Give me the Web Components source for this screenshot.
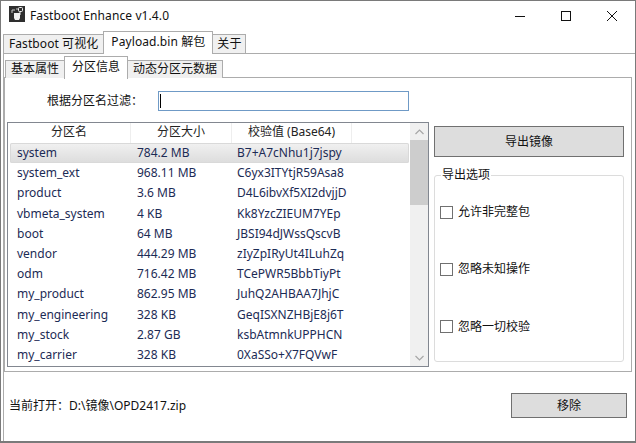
<!DOCTYPE html>
<html>
<head>
<meta charset="utf-8">
<style>
  html, body { margin: 0; padding: 0; background: #fff; }
  body { font: 12px/16px "Noto Sans", "Noto Sans CJK SC", sans-serif; color: #111; }
</style>
</head>
<body>
<fb-window>
  <fb-titlebar slot="title">Fastboot Enhance v1.4.0</fb-titlebar>
  <fb-tabs class="outer">
    <fb-tab slot="tabs">Fastboot 可视化</fb-tab>
    <fb-tab slot="tabs" selected>Payload.bin 解包</fb-tab>
    <fb-tab slot="tabs" compact>关于</fb-tab>
    <fb-tabs inner>
      <fb-tab slot="tabs" inner>基本属性</fb-tab>
      <fb-tab slot="tabs" inner selected>分区信息</fb-tab>
      <fb-tab slot="tabs" inner>动态分区元数据</fb-tab>
      <fb-partitions></fb-partitions>
    </fb-tabs>
    <fb-status></fb-status>
  </fb-tabs>
</fb-window>
<script>
class FbWindow extends HTMLElement {
  constructor() {
    super();
    this.attachShadow({ mode: 'open' });
    this.shadowRoot.innerHTML = `
      <style>
        :host { display: flex; flex-direction: column; box-sizing: border-box; width: 636px; height: 443px;
          border: 1px solid #7a7a7a; border-bottom-width: 2px; background: #fff; overflow: hidden; }
      </style>
      <slot name="title"></slot>
      <slot></slot>`;
  }
}
customElements.define('fb-window', FbWindow);

class FbTitlebar extends HTMLElement {
  constructor() {
    super();
    this.attachShadow({ mode: 'open' });
    this.shadowRoot.innerHTML = `
      <style>
        :host { display: flex; align-items: center; height: 29px; padding: 0 0 0 8px; flex: none; color: #111; }
        .logo { width: 16px; height: 16px; margin: 0 5px 3px 0; flex: none; }
        .title { flex: 1; letter-spacing: .1px; }
        .btn { width: 46px; height: 29px; display: flex; align-items: center; justify-content: center; }
      </style>
      <svg class="logo" viewBox="0 0 16 16">
        <rect width="16" height="16" fill="#2e2e2e"/>
        <path d="M3 7V4h3M8 4V2" fill="none" stroke="#c8c8c8" stroke-width="1"/>
        <rect x="9.5" y="1.5" width="4" height="4" rx="1" fill="none" stroke="#f2f2f2"/>
        <path d="M11 6v3" stroke="#f2f2f2"/>
        <path d="M5 7h6v5l-1 2H6l-1-2z" fill="#f2f2f2"/>
      </svg>
      <span class="title"><slot></slot></span>
      <span class="btn"><svg width="12" height="12"><path d="M1 6.5h10" stroke="#111" fill="none"/></svg></span>
      <span class="btn"><svg width="12" height="12"><rect x="1.5" y="1.5" width="9" height="9" stroke="#111" fill="none"/></svg></span>
      <span class="btn"><svg width="12" height="12"><path d="M1 1l10 10M11 1L1 11" stroke="#111" fill="none"/></svg></span>`;
  }
}
customElements.define('fb-titlebar', FbTitlebar);

class FbTab extends HTMLElement {
  constructor() {
    super();
    this.attachShadow({ mode: 'open' });
    this.shadowRoot.innerHTML = `
      <style>
        :host { display: flex; align-items: center; justify-content: center; box-sizing: border-box;
          height: 19px; margin-top: 3px; padding: 0 5px 1px; background: #f0f0f0; border: 1px solid #acacac; border-bottom: none;
          margin-left: -1px; white-space: nowrap; position: relative; letter-spacing: .08px; }
        :host([compact]) { padding: 0 4px 1px; }
        :host([selected]) { height: 23px; margin-top: 0; margin-bottom: -1px; padding: 0 7px 3px; background: #fff; z-index: 1; }
        :host([inner]) { height: 18px; margin-top: 4px; letter-spacing: 0; }
        :host([inner][selected]) { height: 23px; margin-top: 0; }
      </style>
      <slot></slot>`;
  }
}
customElements.define('fb-tab', FbTab);

class FbTabs extends HTMLElement {
  constructor() {
    super();
    this.attachShadow({ mode: 'open' });
    this.shadowRoot.innerHTML = `
      <style>
        :host { display: flex; flex-direction: column; flex: 1; min-height: 0; margin: 1px -1px 0 2px; }
        :host([inner]) { margin: 2px 3px 0 0; flex: none; height: 316px; }
        .strip { display: flex; height: 22px; padding-left: 1px; flex: none; }
        :host([inner]) .strip { padding-left: 2px; height: 21px; }
        .panel { flex: 1; min-height: 0; border: 1px solid #acacac; border-bottom: none; display: flex; flex-direction: column; }
        :host([inner]) .panel { border-bottom: 1px solid #acacac; }
      </style>
      <div class="strip"><slot name="tabs"></slot></div>
      <div class="panel"><slot></slot></div>`;
  }
}
customElements.define('fb-tabs', FbTabs);

class FbButton extends HTMLElement {
  constructor() {
    super();
    this.attachShadow({ mode: 'open' });
    this.shadowRoot.innerHTML = `
      <style>
        :host { display: flex; align-items: center; justify-content: center; box-sizing: border-box;
          background: #dddddd; border: 1px solid #707070; }
      </style>
      <slot></slot>`;
  }
}
customElements.define('fb-button', FbButton);

class FbCheck extends HTMLElement {
  constructor() {
    super();
    this.attachShadow({ mode: 'open' });
    this.shadowRoot.innerHTML = `
      <style>
        :host { display: flex; align-items: center; gap: 5px; height: 16px; }
        i { width: 13px; height: 13px; box-sizing: border-box; border: 1px solid #707070; background: #fff; }
      </style>
      <i></i><slot></slot>`;
  }
}
customElements.define('fb-check', FbCheck);

class FbList extends HTMLElement {
  constructor() {
    super();
    this.attachShadow({ mode: 'open' });
    const rows = JSON.parse(this.getAttribute('rows') || '[]');
    this.shadowRoot.innerHTML = `
      <style>
        :host { display: grid; grid-template-columns: 1fr 18px; box-sizing: border-box; height: 245px;
          border: 1px solid #828790; background: #fff; overflow: hidden; color: #1c2b55; }
        .main { min-width: 0; overflow: hidden; }
        .head { display: grid; grid-template-columns: 123px 101px 120px 1fr; height: 20px; color: #222; }
        .row { display: grid; grid-template-columns: 121px 101px 120px 1fr; }
        .head span { text-align: center; border-right: 1px solid #eeeeee; line-height: 18px; }
        .row { height: 20.2px; line-height: 20px; margin: 0 1px 0 2px; border-radius: 2px; }
        .row span { padding-left: 7px; overflow: hidden; white-space: nowrap; }
        .row span + span { padding-left: 6px; }
        .row span:nth-child(3) { padding: 0 6px 0 5px; }
        .row.sel { background: linear-gradient(#f1f1f1, #dcdcdc); box-shadow: inset 0 0 0 1px #d9d9d9; }
        .bar { background: #f0f0f0; display: flex; flex-direction: column; align-items: center; }
        .arrow { height: 17px; flex: none; display: flex; align-items: center; justify-content: center; width: 100%; }
        .thumb { height: 65px; width: 100%; background: #cdcdcd; }
        .track { flex: 1; }
      </style>
      <div class="main">
        <div class="head"><span>分区名</span><span>分区大小</span><span>校验值 (Base64)</span><span style="border:0"></span></div>
        ${rows.map((r, i) => `<div class="row${i === 0 ? ' sel' : ''}"><span>${r[0]}</span><span>${r[1]}</span><span>${r[2]}</span></div>`).join('')}
      </div>
      <div class="bar">
        <div class="arrow"><svg width="9" height="6"><path d="M.5 5L4.5 1l4 4" fill="none" stroke="#a6a6a6" stroke-width="1.2"/></svg></div>
        <div class="thumb"></div>
        <div class="track"></div>
        <div class="arrow"><svg width="9" height="6"><path d="M.5 1l4 4 4-4" fill="none" stroke="#a6a6a6" stroke-width="1.2"/></svg></div>
      </div>`;
  }
}
customElements.define('fb-list', FbList);

class FbGroup extends HTMLElement {
  constructor() {
    super();
    this.attachShadow({ mode: 'open' });
    this.shadowRoot.innerHTML = `
      <style>
        :host { display: block; box-sizing: border-box; height: 187px; border: 1px solid #dcdcdc; border-radius: 3px; position: relative; padding: 28px 0 0 5px; }
        .label { position: absolute; left: 6px; top: -9px; background: #fff; padding: 0 1px; }
        .items { display: grid; row-gap: 41.25px; }
      </style>
      <span class="label">${this.getAttribute('label')}</span>
      <div class="items"><slot></slot></div>`;
  }
}
customElements.define('fb-group', FbGroup);

class FbPartitions extends HTMLElement {
  constructor() {
    super();
    this.attachShadow({ mode: 'open' });
    const rows = [
      ['system', '784.2 MB', 'B7+A7cNhu1j7jspy'],
      ['system_ext', '968.11 MB', 'C6yx3ITYtjR59Asa8'],
      ['product', '3.6 MB', 'D4L6ibvXf5XI2dvjjD'],
      ['vbmeta_system', '4 KB', 'Kk8YzcZIEUM7YEp'],
      ['boot', '64 MB', 'JBSI94dJWssQscvB'],
      ['vendor', '444.29 MB', 'zIyZpIRyUt4ILuhZq'],
      ['odm', '716.42 MB', 'TCePWR5BbbTiyPt'],
      ['my_product', '862.95 MB', 'JuhQ2AHBAA7JhjC'],
      ['my_engineering', '328 KB', 'GeqISXNZHBjE8j6T'],
      ['my_stock', '2.87 GB', 'ksbAtmnkUPPHCN'],
      ['my_carrier', '328 KB', '0XaSSo+X7FQVwF']
    ];
    this.shadowRoot.innerHTML = `
      <style>
        :host { display: block; flex: 1; min-height: 0; padding: 13px 0 0 2px; }
        .filter { display: flex; align-items: center; height: 20px; padding-left: 40px; }
        .filter label { width: 111px; flex: none; }
        .filter .box { width: 251px; height: 20px; box-sizing: border-box; border: 1px solid #6f9ac6; padding: 2px 1px; }
        .filter .box i { display: block; width: 1px; height: 14px; background: #000; }
        .body { display: grid; grid-template-columns: 422px 190px; column-gap: 5px; margin-top: 11px; }
        .side { padding-top: 4px; display: flex; flex-direction: column; }
        fb-button { height: 31px; margin-bottom: 18px; }
      </style>
      <div class="filter"><label>根据分区名过滤：</label><div class="box"><i></i></div></div>
      <div class="body">
        <fb-list rows='${JSON.stringify(rows)}'></fb-list>
        <div class="side">
          <fb-button>导出镜像</fb-button>
          <fb-group label="导出选项">
            <fb-check>允许非完整包</fb-check>
            <fb-check>忽略未知操作</fb-check>
            <fb-check>忽略一切校验</fb-check>
          </fb-group>
        </div>
      </div>`;
  }
}
customElements.define('fb-partitions', FbPartitions);

class FbStatus extends HTMLElement {
  constructor() {
    super();
    this.attachShadow({ mode: 'open' });
    this.shadowRoot.innerHTML = `
      <style>
        :host { display: flex; align-items: center; justify-content: space-between; height: 25px; margin-top: 21px; padding: 0 8px 0 5px; }
        fb-button { width: 116px; height: 25px; }
      </style>
      <span>当前打开：D:\\镜像\\OPD2417.zip</span>
      <fb-button>移除</fb-button>`;
  }
}
customElements.define('fb-status', FbStatus);
</script>
</body>
</html>
